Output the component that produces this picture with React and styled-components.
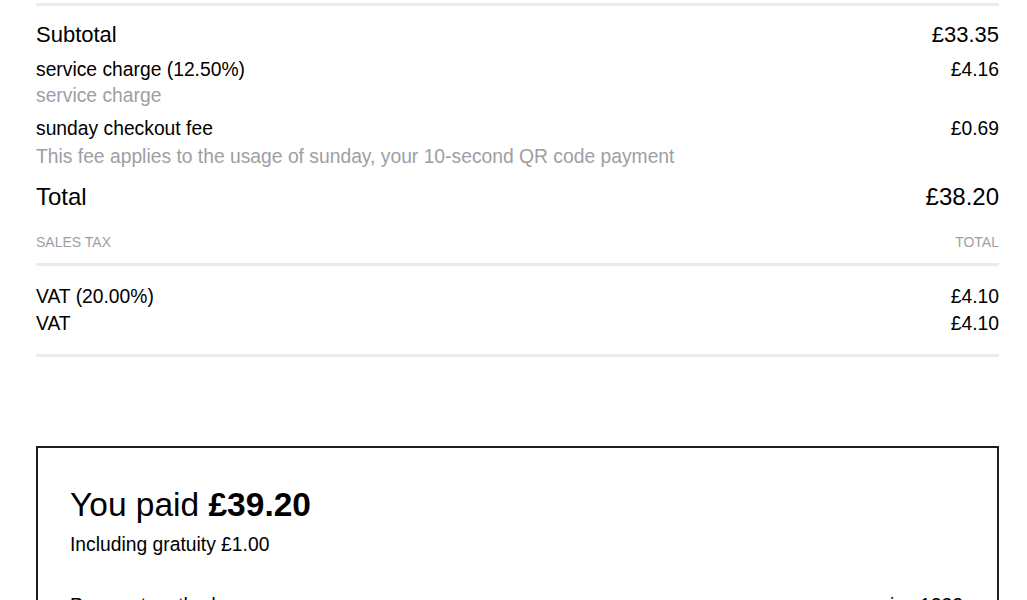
import React from "react";
import styled, { createGlobalStyle } from "styled-components";

const Global = createGlobalStyle`
  html, body { margin: 0; padding: 0; background: #fff; }
  body {
    font-family: "Liberation Sans", Arial, Helvetica, sans-serif;
    color: #000;
    -webkit-font-smoothing: antialiased;
  }
`;

const Page = styled.main`
  padding: 3px 28px 40px 36px;
`;

const Divider = styled.hr`
  border: 0;
  height: 3px;
  background: #ebebef;
  margin: ${(p) => p.$m || "0"};
`;

const Row = styled.div`
  display: flex;
  justify-content: space-between;
  align-items: baseline;
  font-size: ${(p) => p.$size || 19.3}px;
  line-height: ${(p) => p.$lh || 26}px;
  margin-top: ${(p) => p.$mt || 0}px;
  color: #000;
`;

const Note = styled.div`
  font-size: 19.3px;
  line-height: 26px;
  color: #9e9ea6;
  margin-top: ${(p) => p.$mt || 0}px;
`;

const HeadRow = styled.div`
  display: flex;
  justify-content: space-between;
  font-size: 14px;
  line-height: 18px;
  text-transform: uppercase;
  color: #9e9ea6;
  margin-top: 21px;
`;

const Box = styled.section`
  margin-top: 89px;
  border: 2px solid #1e1e1e;
  padding: 37px 34px 30px 32px;
`;

const Paid = styled.h2`
  margin: 0;
  font-size: 33.5px;
  line-height: 40px;
  font-weight: 400;
  color: #000;
  strong { font-weight: 700; }
`;

const Sub = styled.p`
  margin: 7px 0 0;
  font-size: 19.3px;
  line-height: 26px;
  color: #000;
`;

const lines = [
  { label: "Subtotal", value: "£33.35", size: 22, lh: 28, mt: 15 },
  { label: "service charge (12.50%)", value: "£4.16", mt: 8, note: "service charge" },
  {
    label: "sunday checkout fee",
    value: "£0.69",
    mt: 7,
    note: "This fee applies to the usage of sunday, your 10-second QR code payment",
    noteMt: 2,
  },
];

const taxes = [
  { label: "VAT (20.00%)", value: "£4.10" },
  { label: "VAT", value: "£4.10" },
];

export default function App() {
  return (
    <>
      <Global />
      <Page>
        <Divider />
        {lines.map((l) => (
          <React.Fragment key={l.label}>
            <Row $size={l.size} $lh={l.lh} $mt={l.mt}>
              <span>{l.label}</span>
              <span>{l.value}</span>
            </Row>
            {l.note && <Note $mt={l.noteMt}>{l.note}</Note>}
          </React.Fragment>
        ))}
        <Row $size={24} $lh={30} $mt={12}>
          <span>Total</span>
          <span>£38.20</span>
        </Row>
        <HeadRow>
          <span>Sales tax</span>
          <span>Total</span>
        </HeadRow>
        <Divider $m="12px 0 17px" />
        {taxes.map((t, i) => (
          <Row key={i} $lh={27}>
            <span>{t.label}</span>
            <span>{t.value}</span>
          </Row>
        ))}
        <Divider $m="17px 0 0" />
        <Box>
          <Paid>
            You paid <strong>£39.20</strong>
          </Paid>
          <Sub>Including gratuity £1.00</Sub>
          <Row $mt={35}>
            <span>Payment method</span>
            <span>visa 1232</span>
          </Row>
          <Row $mt={8}>
            <span>Date</span>
            <span>12/03/2024</span>
          </Row>
        </Box>
      </Page>
    </>
  );
}
